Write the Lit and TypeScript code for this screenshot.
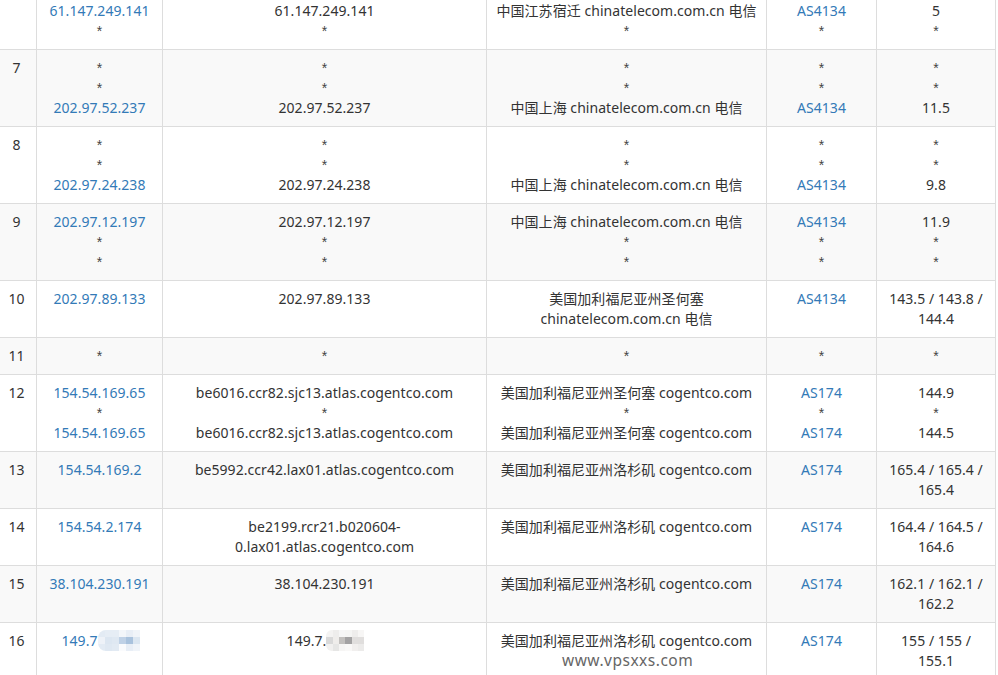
import { LitElement, html, css } from "lit";
import { customElement } from "lit/decorators.js";

type Row = [string, string[], string[], string[], string[], string[]];
const T = "chinatelecom.com.cn 电信";
const SH = "中国上海 " + T;
const SJ = "美国加利福尼亚州圣何塞 cogentco.com";
const LA = "美国加利福尼亚州洛杉矶 cogentco.com";

const rows: Row[] = [
  ["6", ["*", "61.147.249.141", "*"], ["*", "61.147.249.141", "*"], ["*", "中国江苏宿迁 " + T, "*"], ["*", "AS4134", "*"], ["*", "5", "*"]],
  ["7", ["*", "*", "202.97.52.237"], ["*", "*", "202.97.52.237"], ["*", "*", SH], ["*", "*", "AS4134"], ["*", "*", "11.5"]],
  ["8", ["*", "*", "202.97.24.238"], ["*", "*", "202.97.24.238"], ["*", "*", SH], ["*", "*", "AS4134"], ["*", "*", "9.8"]],
  ["9", ["202.97.12.197", "*", "*"], ["202.97.12.197", "*", "*"], [SH, "*", "*"], ["AS4134", "*", "*"], ["11.9", "*", "*"]],
  ["10", ["202.97.89.133"], ["202.97.89.133"], ["美国加利福尼亚州圣何塞 " + T], ["AS4134"], ["143.5 / 143.8 / 144.4"]],
  ["11", ["*"], ["*"], ["*"], ["*"], ["*"]],
  ["12", ["154.54.169.65", "*", "154.54.169.65"], ["be6016.ccr82.sjc13.atlas.cogentco.com", "*", "be6016.ccr82.sjc13.atlas.cogentco.com"], [SJ, "*", SJ], ["AS174", "*", "AS174"], ["144.9", "*", "144.5"]],
  ["13", ["154.54.169.2"], ["be5992.ccr42.lax01.atlas.cogentco.com"], [LA], ["AS174"], ["165.4 / 165.4 / 165.4"]],
  ["14", ["154.54.2.174"], ["be2199.rcr21.b020604-0.lax01.atlas.cogentco.com"], [LA], ["AS174"], ["164.4 / 164.5 / 164.6"]],
  ["15", ["38.104.230.191"], ["38.104.230.191"], [LA], ["AS174"], ["162.1 / 162.1 / 162.2"]],
  ["16", ["149.7"], ["149.7."], [LA], ["AS174"], ["155 / 155 / 155.1"]],
];

const mosaicBlue = ["#e3ebf4","#e6edf5","#e6edf5","#f3f6fa","#e8eef6","#f0f4f9","#eef2f8","#dce6f1","#dfe8f2","#bfd1e6","#a9c2dd","#dbe6f1","#e3ebf4","#dfe8f2","#e2eaf3","#fafbfd","#e8eef6","#f0f4f9"];
const mosaicGrey = ["#f4f3f2","#eeedec","#f6f6f6","#f5f5f4","#eeedec","#f7f6f5","#d9d9d9","#efedeb","#c2c0be","#a3a2a3","#e0dedd","#e0dedd","#f1f0ef","#e6e6e5","#f6f5f4","#f9f8f7","#f1efee","#ecebea"];

@customElement("app-root")
export class AppRoot extends LitElement {
  static styles = css`
    :host {
      display: block;
      height: 675px;
      overflow: hidden;
      position: relative;
      background: #fff;
      font-family: "Noto Sans", "Noto Sans CJK SC", sans-serif;
      font-size: 14px;
      line-height: 20px;
      color: #333;
    }
    table {
      border-collapse: collapse;
      table-layout: fixed;
      width: 996px;
      margin: -28px 0 0 -1px;
      letter-spacing: 0.05px;
    }
    td {
      border: 1px solid #ddd;
      padding: 8px;
      vertical-align: top;
      text-align: center;
    }
    td.num { padding-right: 11px; }
    tr:nth-child(even) td { background: #f9f9f9; }
    .line { display: block; }
    .link { color: #337ab7; }
    .star { font-family: "Liberation Sans", sans-serif; color: #444; }
    .masked { padding-left: 2px; }
    .mosaic {
      display: inline-grid;
      grid-auto-rows: 7px;
      vertical-align: top;
      overflow: hidden;
      margin-top: -1px;
      border-radius: 8px 0 0 8px;
    }
    .m1 { grid-template-columns: repeat(6, 7px); }
    .m2 { grid-template-columns: repeat(6, 1fr); width: 38px; border-radius: 6px 0 0 6px; }
    .mosaic span { display: block; }
    .mark {
      position: absolute;
      left: 562px;
      top: 650px;
      font-size: 15.5px;
      letter-spacing: 0.5px;
      color: #666;
      white-space: nowrap;
    }
  `;

  private mosaic(cls: string, colors: string[]) {
    return html`<span class="mosaic ${cls}">${colors.map((c) => html`<span style="background:${c}"></span>`)}</span>`;
  }

  private lines(items: string[], link = false) {
    return items.map((t) => {
      const masked = t === "149.7" || t === "149.7.";
      const cls = t === "*" ? "star" : link ? "link" : "";
      return html`<span class="line ${cls} ${masked ? "masked" : ""}">${t}${masked
        ? this.mosaic(link ? "m1" : "m2", link ? mosaicBlue : mosaicGrey)
        : ""}</span>`;
    });
  }

  render() {
    return html`
      <table>
        <colgroup>
          <col style="width:37px" /><col style="width:126px" /><col style="width:324px" />
          <col style="width:280px" /><col style="width:110px" /><col style="width:119px" />
        </colgroup>
        <tbody>
          ${rows.map(
            (r) => html`<tr>
              <td class="num">${r[0]}</td>
              <td>${this.lines(r[1], true)}</td>
              <td>${this.lines(r[2])}</td>
              <td>${this.lines(r[3])}</td>
              <td>${this.lines(r[4], true)}</td>
              <td>${this.lines(r[5])}</td>
            </tr>`
          )}
        </tbody>
      </table>
      <div class="mark">www.vpsxxs.com</div>
    `;
  }
}
